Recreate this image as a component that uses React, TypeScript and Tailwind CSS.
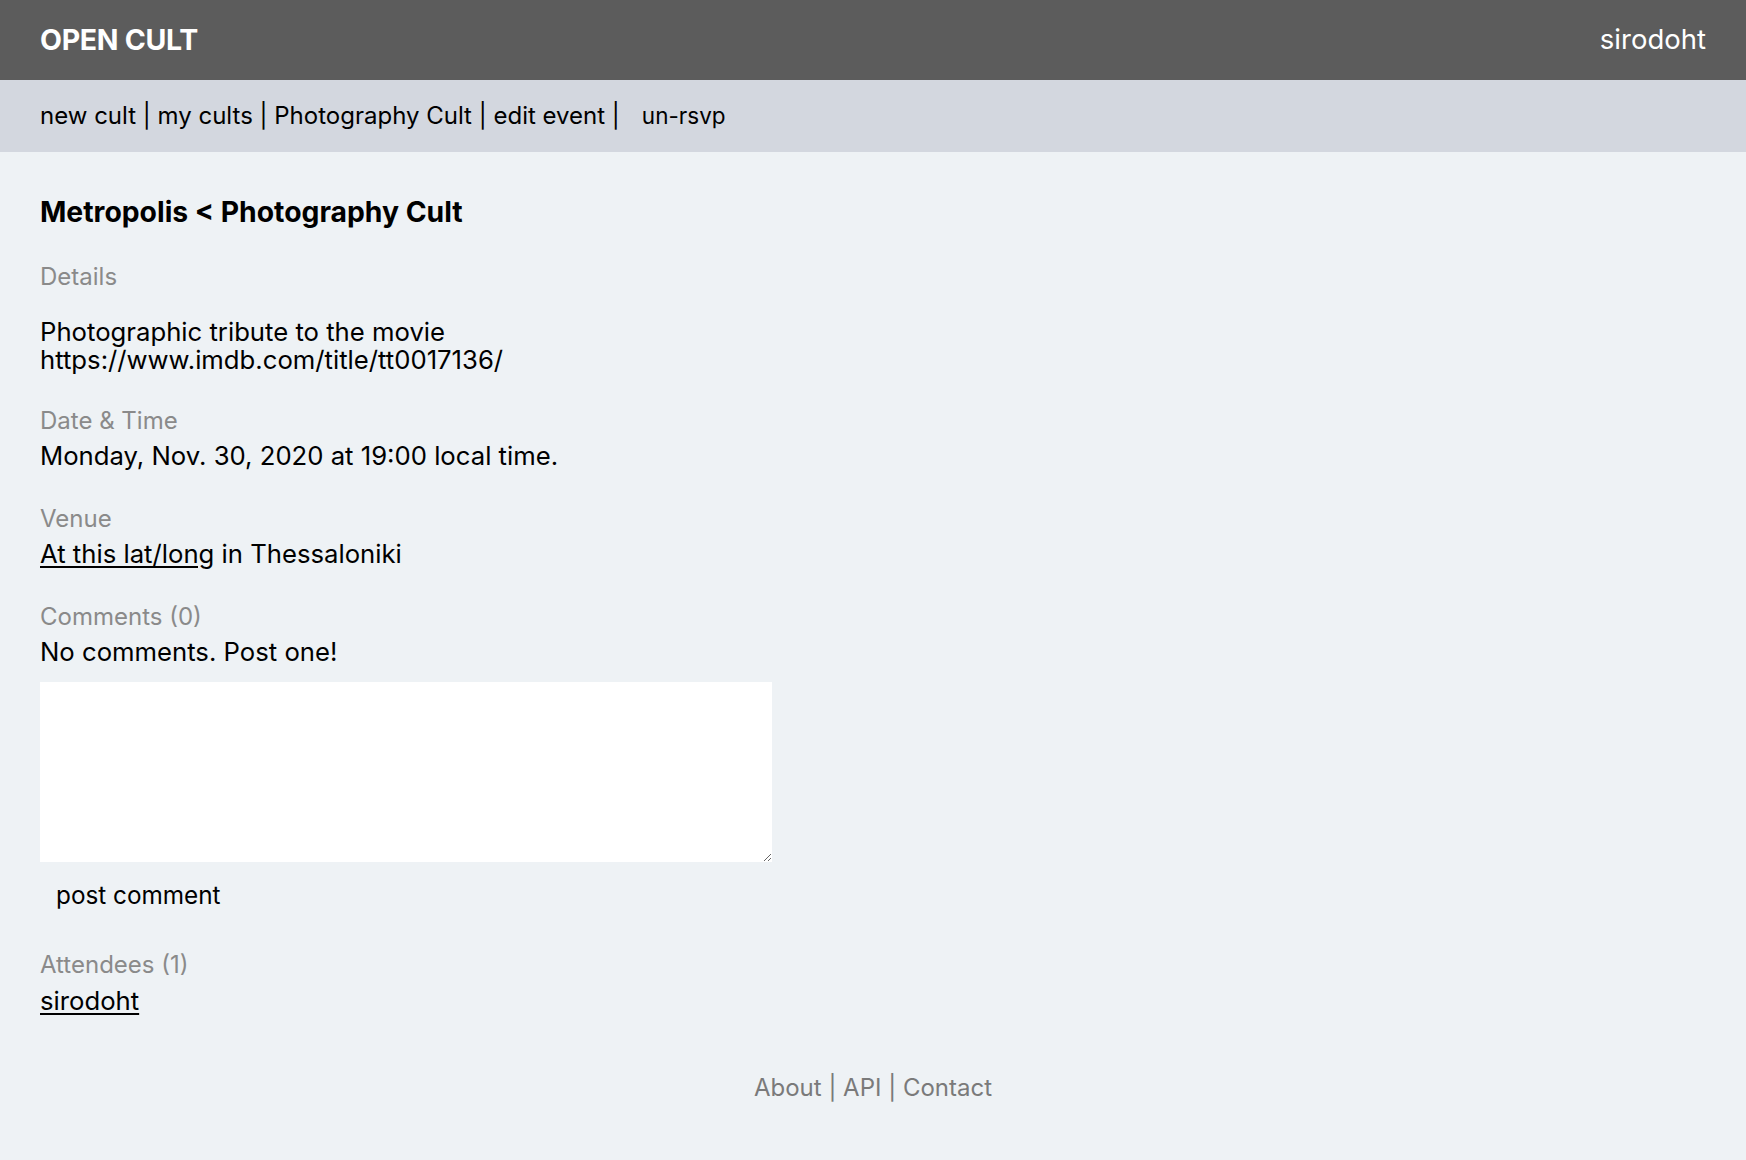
const font = { fontFamily: 'Inter, "Noto Sans", sans-serif' }

function Label({ children }: { children: React.ReactNode }) {
  return <div className="text-[24px] leading-[28px] text-[#8a8a8a]">{children}</div>
}

export default function App() {
  return (
    <div style={font} className="min-h-screen w-full bg-[#eef2f5] text-black">
      <header className="h-20 bg-[#5c5c5c] px-10 flex items-center justify-between text-white">
        <a href="#" className="text-[28.5px] font-bold tracking-[-0.3px]">
          OPEN CULT
        </a>
        <a href="#" className="text-[27.5px]">
          sirodoht
        </a>
      </header>

      <nav className="h-[72px] bg-[#d3d7df] px-10 flex items-center text-[24px] whitespace-pre">
        <span>
          <a href="#">new cult</a> | <a href="#">my cults</a> | <a href="#">Photography Cult</a> |{' '}
          <a href="#">edit event</a> |
        </span>
        <button className="ml-[22px] text-[22.5px]">un-rsvp</button>
      </nav>

      <main className="px-10 pt-11 text-[25.7px] leading-[28px]">
        <h1 className="text-[28.3px] leading-8 font-bold">Metropolis &lt; Photography Cult</h1>

        <section className="mt-[35px]">
          <Label>Details</Label>
          <p className="mt-[27px]">
            Photographic tribute to the movie
            <br />
            https://www.imdb.com/title/tt0017136/
          </p>
        </section>

        <section className="mt-[33px]">
          <Label>Date &amp; Time</Label>
          <div className="mt-[7px]">Monday, Nov. 30, 2020 at 19:00 local time.</div>
        </section>

        <section className="mt-[35px]">
          <Label>Venue</Label>
          <div className="mt-[7px]">
            <a href="#" className="underline underline-offset-[3px]">
              At this lat/long
            </a>{' '}
            in Thessaloniki
          </div>
        </section>

        <section className="mt-[35px]">
          <Label>Comments (0)</Label>
          <div className="mt-[7px]">No comments. Post one!</div>
          <form className="mt-4">
            <textarea className="block w-[732px] h-[180px] bg-white outline-none resize" />
            <button type="button" className="mt-[19px] px-4 text-[24.3px] leading-[28px]">
              post comment
            </button>
          </form>
        </section>

        <section className="mt-[42px]">
          <Label>Attendees (1)</Label>
          <div className="mt-2">
            <a href="#" className="underline underline-offset-[3px]">
              sirodoht
            </a>
          </div>
        </section>
      </main>

      <footer className="mt-[59px] pb-14 text-center text-[24px] leading-[28px] text-[#7a7a7a]">
        <a href="#">About</a> | <a href="#">API</a> | <a href="#">Contact</a>
      </footer>
    </div>
  )
}
